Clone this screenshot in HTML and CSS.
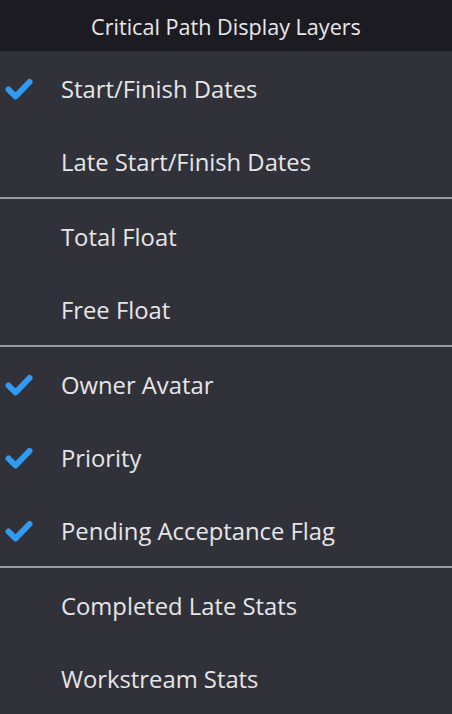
FILE: index.html
```html
<!DOCTYPE html>
<html>
<head>
<meta charset="utf-8">
<link rel="stylesheet" href="styles.css">
</head>
<body>
<div class="menu">
  <div class="header">Critical Path Display Layers</div>
  <div class="group">
    <div class="item checked"><span class="check"><svg viewBox="0 0 28 23" width="28" height="23"><path d="M3.5 11.5 L10.5 18.5 L24.5 4" fill="none" stroke="#2f9bf2" stroke-width="6" stroke-linecap="round" stroke-linejoin="round"/></svg></span><span class="label">Start/Finish Dates</span></div>
    <div class="item"><span class="check"></span><span class="label">Late Start/Finish Dates</span></div>
  </div>
  <div class="group">
    <div class="item"><span class="check"></span><span class="label">Total Float</span></div>
    <div class="item"><span class="check"></span><span class="label">Free Float</span></div>
  </div>
  <div class="group">
    <div class="item checked"><span class="check"><svg viewBox="0 0 28 23" width="28" height="23"><path d="M3.5 11.5 L10.5 18.5 L24.5 4" fill="none" stroke="#2f9bf2" stroke-width="6" stroke-linecap="round" stroke-linejoin="round"/></svg></span><span class="label">Owner Avatar</span></div>
    <div class="item checked"><span class="check"><svg viewBox="0 0 28 23" width="28" height="23"><path d="M3.5 11.5 L10.5 18.5 L24.5 4" fill="none" stroke="#2f9bf2" stroke-width="6" stroke-linecap="round" stroke-linejoin="round"/></svg></span><span class="label">Priority</span></div>
    <div class="item checked"><span class="check"><svg viewBox="0 0 28 23" width="28" height="23"><path d="M3.5 11.5 L10.5 18.5 L24.5 4" fill="none" stroke="#2f9bf2" stroke-width="6" stroke-linecap="round" stroke-linejoin="round"/></svg></span><span class="label">Pending Acceptance Flag</span></div>
  </div>
  <div class="group">
    <div class="item"><span class="check"></span><span class="label">Completed Late Stats</span></div>
    <div class="item"><span class="check"></span><span class="label">Workstream Stats</span></div>
  </div>
</div>
</body>
</html>
```
FILE: styles.css
```css
html, body {
  margin: 0;
  padding: 0;
  background: #31313a;
}
.menu {
  width: 452px;
  height: 714px;
  background: #31313a;
  font-family: "Open Sans", "Noto Sans", sans-serif;
  color: #e6e6e8;
  overflow: hidden;
}
.header {
  height: 51px;
  background: #1c1b21;
  display: flex;
  align-items: center;
  justify-content: center;
  font-size: 21.6px;
  color: #e8e8ea;
  padding-top: 1px;
  box-sizing: border-box;
}
.group + .group {
  border-top: 2px solid #9c9ca0;
}
.item {
  height: 73px;
  display: flex;
  align-items: center;
}
.check {
  width: 61px;
  padding-left: 5px;
  padding-top: 3px;
  box-sizing: border-box;
  display: flex;
  align-items: center;
}
.check svg {
  display: block;
}
.label {
  font-size: 23.8px;
  line-height: 1;
  padding-top: 5px;
}
```
